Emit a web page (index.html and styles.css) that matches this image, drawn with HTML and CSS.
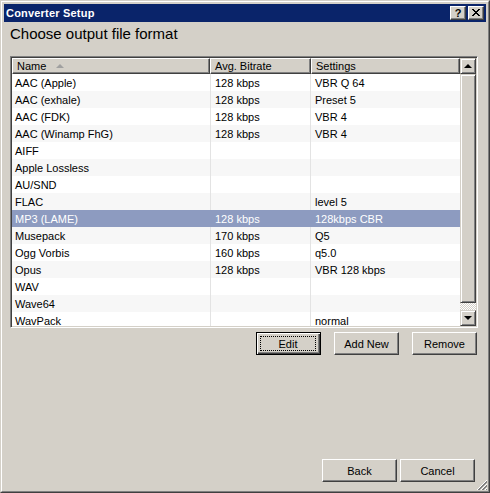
FILE: index.html
```html
<!DOCTYPE html>
<html>
<head>
<meta charset="utf-8">
<link rel="stylesheet" href="styles.css">
</head>
<body>
<div class="window">
  <div class="frame">
    <div class="titlebar">
      <span class="title">Converter Setup</span>
      <div class="tbtns">
        <div class="tbtn help">?</div>
        <div class="tbtn close"><svg width="8" height="7" viewBox="0 0 8 7" shape-rendering="crispEdges"><path d="M0 0h2v1H0zM6 0h2v1H6zM1 1h2v1H1zM5 1h2v1H5zM2 2h4v1H2zM3 3h2v1H3zM2 4h4v1H2zM1 5h2v1H1zM5 5h2v1H5zM0 6h2v1H0zM6 6h2v1H6z" fill="#000"/></svg></div>
      </div>
    </div>
    <div class="content">
      <h1 class="heading">Choose output file format</h1>
      <div class="list">
        <div class="grid">
          <div class="hdr">
            <div class="hc c1">Name <span class="sort"></span></div>
            <div class="hc c2">Avg. Bitrate</div>
            <div class="hc c3">Settings</div>
          </div>
          <div class="row"><div class="cell c1">AAC (Apple)</div><div class="cell c2">128 kbps</div><div class="cell c3">VBR Q 64</div></div>
          <div class="row alt"><div class="cell c1">AAC (exhale)</div><div class="cell c2">128 kbps</div><div class="cell c3">Preset 5</div></div>
          <div class="row"><div class="cell c1">AAC (FDK)</div><div class="cell c2">128 kbps</div><div class="cell c3">VBR 4</div></div>
          <div class="row alt"><div class="cell c1">AAC (Winamp FhG)</div><div class="cell c2">128 kbps</div><div class="cell c3">VBR 4</div></div>
          <div class="row"><div class="cell c1">AIFF</div><div class="cell c2"></div><div class="cell c3"></div></div>
          <div class="row alt"><div class="cell c1">Apple Lossless</div><div class="cell c2"></div><div class="cell c3"></div></div>
          <div class="row"><div class="cell c1">AU/SND</div><div class="cell c2"></div><div class="cell c3"></div></div>
          <div class="row alt"><div class="cell c1">FLAC</div><div class="cell c2"></div><div class="cell c3">level 5</div></div>
          <div class="row sel"><div class="cell c1">MP3 (LAME)</div><div class="cell c2">128 kbps</div><div class="cell c3">128kbps CBR</div></div>
          <div class="row alt"><div class="cell c1">Musepack</div><div class="cell c2">170 kbps</div><div class="cell c3">Q5</div></div>
          <div class="row"><div class="cell c1">Ogg Vorbis</div><div class="cell c2">160 kbps</div><div class="cell c3">q5.0</div></div>
          <div class="row alt"><div class="cell c1">Opus</div><div class="cell c2">128 kbps</div><div class="cell c3">VBR 128 kbps</div></div>
          <div class="row"><div class="cell c1">WAV</div><div class="cell c2"></div><div class="cell c3"></div></div>
          <div class="row alt"><div class="cell c1">Wave64</div><div class="cell c2"></div><div class="cell c3"></div></div>
          <div class="row"><div class="cell c1">WavPack</div><div class="cell c2"></div><div class="cell c3">normal</div></div>
        </div>
        <div class="vscroll">
          <div class="sbtn"><span class="arr up"></span></div>
          <div class="thumb"></div>
          <div class="track"></div>
          <div class="sbtn"><span class="arr down"></span></div>
        </div>
      </div>
      <div class="actions">
        <button class="btn default"><span class="focus">Edit</span></button>
        <button class="btn">Add New</button>
        <button class="btn">Remove</button>
      </div>
      <div class="spacer"></div>
      <div class="nav">
        <button class="btn wide">Back</button>
        <button class="btn wide">Cancel</button>
      </div>
    </div>
    <svg class="grip" width="12" height="12" viewBox="0 0 12 12" shape-rendering="crispEdges">
      <path d="M11 1L1 11M11 5L5 11M11 9L9 11" stroke="#fff" stroke-width="1" fill="none"/>
      <path d="M11 2L2 11M11 3L3 11M11 6L6 11M11 7L7 11M11 10L10 11" stroke="#808080" stroke-width="1" fill="none"/>
    </svg>
  </div>
</div>
</body>
</html>
```
FILE: styles.css
```css
html, body {
  margin: 0;
  padding: 0;
  background: #d4d0c8;
}
body {
  font-family: "Liberation Sans", Arial, sans-serif;
  font-size: 11px;
  color: #000;
}
.window {
  width: 490px;
  height: 493px;
  box-sizing: border-box;
  border: 1px solid;
  border-color: #d4d0c8 #404040 #404040 #d4d0c8;
  display: flex;
}
.frame {
  flex: 1;
  border: 1px solid;
  border-color: #fff #808080 #808080 #fff;
  padding: 2px;
  display: flex;
  flex-direction: column;
  position: relative;
}
.titlebar {
  height: 18px;
  background: #0a246a;
  color: #fff;
  display: flex;
  align-items: center;
  justify-content: space-between;
  padding: 0 2px 0 2px;
}
.title {
  font-weight: bold;
  font-size: 11px;
  letter-spacing: 0.2px;
}
.tbtns {
  display: flex;
  gap: 2px;
}
.tbtn {
  width: 16px;
  height: 14px;
  box-sizing: border-box;
  background: #d4d0c8;
  border: 1px solid;
  border-color: #fff #404040 #404040 #fff;
  box-shadow: inset -1px -1px #808080;
  display: flex;
  align-items: center;
  justify-content: center;
  color: #000;
}
.help {
  font-weight: bold;
  font-size: 11px;
  line-height: 12px;
}
.close svg {
  display: block;
  margin-top: -1px;
}
.content {
  flex: 1;
  display: flex;
  flex-direction: column;
  padding: 0 8px 7px 6px;
}
.heading {
  margin: 3px 0 13px 0;
  font-size: 15px;
  line-height: 18px;
  font-weight: normal;
}
.list {
  width: 468px;
  height: 272px;
  box-sizing: border-box;
  border: 1px solid;
  border-color: #808080 #fff #fff #808080;
  box-shadow: inset 1px 1px #404040, inset -1px -1px #d4d0c8;
  padding: 1px;
  display: flex;
  background: #fff;
}
.grid {
  flex: 1;
  overflow: hidden;
}
.hdr {
  display: flex;
  height: 16px;
  background: #d4d0c8;
}
.hc {
  box-sizing: border-box;
  height: 16px;
  border: 1px solid;
  border-color: #fff #404040 #404040 #fff;
  box-shadow: inset -1px -1px #808080;
  padding-left: 4px;
  line-height: 13px;
  display: flex;
  align-items: center;
  white-space: nowrap;
}
.hdr .c1 { width: 198px; }
.hdr .c2 { width: 101px; }
.hdr .c3 { width: 149px; }
.sort {
  display: inline-block;
  width: 0;
  height: 0;
  border-left: 4px solid transparent;
  border-right: 4px solid transparent;
  border-bottom: 4px solid #a0a0a0;
  margin-left: 10px;
}
.row {
  display: flex;
  height: 17px;
  line-height: 16px;
  background: #fff;
}
.row.alt {
  background: #f7f7f7;
}
.row.sel {
  background: #8d9bc0;
  color: #fff;
}
.cell {
  box-sizing: border-box;
  white-space: nowrap;
  overflow: hidden;
  padding: 1px 0 0 4px;
}
.row .c1 { width: 199px; border-right: 1px solid #e3e3e3; padding-left: 3px; }
.row .c2 { width: 100px; border-right: 1px solid #e3e3e3; }
.row .c3 { width: 149px; }
.row.sel .c1, .row.sel .c2 { border-right-color: #8d9bc0; }
.vscroll {
  width: 16px;
  display: flex;
  flex-direction: column;
}
.sbtn, .thumb {
  box-sizing: border-box;
  background: #d4d0c8;
  border: 1px solid;
  border-color: #d4d0c8 #404040 #404040 #d4d0c8;
  box-shadow: inset 1px 1px #fff, inset -1px -1px #808080;
}
.sbtn {
  height: 16px;
  display: flex;
  align-items: center;
  justify-content: center;
}
.thumb {
  height: 229px;
}
.track {
  flex: 1;
  background: repeating-conic-gradient(#fff 0 25%, #d4d0c8 0 50%) 0 0 / 2px 2px;
}
.arr {
  width: 0;
  height: 0;
  border-left: 4px solid transparent;
  border-right: 4px solid transparent;
}
.arr.up { border-bottom: 4px solid #000; }
.arr.down { border-top: 4px solid #000; }
.actions {
  display: flex;
  justify-content: flex-end;
  gap: 13px;
  margin-top: 4px;
  padding-right: 1px;
}
.btn {
  appearance: none;
  font-family: "Liberation Sans", Arial, sans-serif;
  font-size: 11px;
  color: #000;
  width: 65px;
  height: 23px;
  box-sizing: border-box;
  background: #d4d0c8;
  border: 1px solid;
  border-color: #fff #404040 #404040 #fff;
  box-shadow: inset -1px -1px #808080;
  padding: 0;
  margin: 0;
  display: flex;
  align-items: center;
  justify-content: center;
}
.btn.default {
  border: 1px solid #000;
  box-shadow: inset 1px 1px #fff, inset -1px -1px #404040, inset -2px -2px #808080;
  padding: 3px 4px 3px 3px;
}
.focus {
  flex: 1;
  align-self: stretch;
  border: 1px dotted #000;
  display: flex;
  align-items: center;
  justify-content: center;
}
.spacer {
  flex: 1;
}
.nav {
  display: flex;
  justify-content: flex-end;
  gap: 3px;
  padding-right: 3px;
}
.btn.wide {
  width: 75px;
}
.grip {
  position: absolute;
  right: 0;
  bottom: 0;
}
```
